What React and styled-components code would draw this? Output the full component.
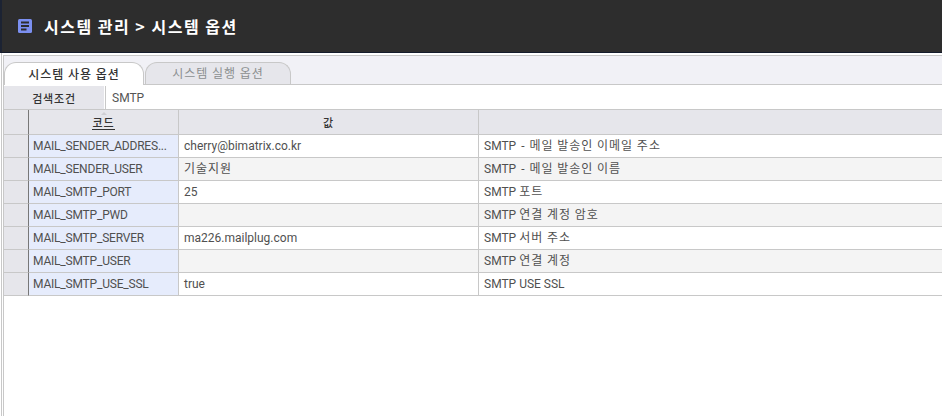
import React from 'react'
import styled, { createGlobalStyle } from 'styled-components'

const GlobalStyle = createGlobalStyle`
html,body{
  margin:0;
  padding:0;
  height:100%;
  background:#fff;
  overflow:hidden;
}
#root{height:100%;}
`;

const FONT = `Roboto,"Noto Sans CJK KR",sans-serif`;
const LINE = '#c8c8c8';

const Page = styled.div`
display:flex;
flex-direction:column;
width:942px;
height:416px;
overflow:hidden;
font-family:${FONT};
color:#444;
`;
const Header = styled.div`
display:flex;
align-items:center;
gap:12px;
height:53px;
flex:none;
box-sizing:border-box;
padding-left:16px;
background:#2d2d2d;
border-left:2px solid #1c2333;
border-bottom:1px solid #141c2c;
`;
const Icon = styled.svg`
width:14px;
height:14px;
flex:none;
`;
const Title = styled.div`
font-family:"Noto Sans CJK KR",sans-serif;
font-size:16px;
font-weight:700;
color:#fff;
letter-spacing:1.5px;
`;
const Body = styled.div`
flex:1;
display:flex;
flex-direction:column;
margin-left:1px;
padding:2px 0 0 1px;
border-left:1px solid ${LINE};
min-height:0;
`;
const Panel = styled.div`
flex:1;
display:flex;
flex-direction:column;
border-left:1px solid ${LINE};
border-top:1px solid ${LINE};
min-height:0;
`;
const TabBar = styled.div`
display:flex;
align-items:flex-end;
gap:1px;
height:29px;
flex:none;
box-sizing:border-box;
background:#f1f1f6;
border-bottom:1px solid ${LINE};
`;
const Tab = styled.div`
display:flex;
align-items:center;
justify-content:center;
box-sizing:border-box;
padding-bottom:2px;
font-family:"Noto Sans CJK KR",sans-serif;
font-size:12px;
letter-spacing:1px;
border:1px solid ${LINE};
border-bottom:none;
border-radius:12px 12px 0 0;
margin-bottom:${({ $active }) => ($active ? '-1px' : '0')};
height:${({ $active }) => ($active ? '23px' : '22px')};
width:${({ $active }) => ($active ? '140px' : '146px')};
background:${({ $active }) => ($active ? '#fff' : '#e6e6eb')};
color:${({ $active }) => ($active ? '#333' : '#8b8f90')};
font-weight:${({ $active }) => ($active ? 500 : 400)};
`;
const SearchRow = styled.div`
display:flex;
height:23px;
flex:none;
margin-top:1px;
`;
const SearchLabel = styled.div`
display:flex;
align-items:center;
justify-content:center;
width:100px;
flex:none;
font-family:"Noto Sans CJK KR",sans-serif;
font-size:11px;
font-weight:500;
letter-spacing:0.8px;
color:#333;
background:#e6e6eb;
`;
const SearchValue = styled.div`
flex:1;
display:flex;
align-items:center;
margin-left:1px;
padding-left:6px;
font-size:12px;
color:#555;
border-left:1px solid ${LINE};
`;
const Grid = styled.div`
display:grid;
grid-template-columns:25px 150px 300px 1fr;
grid-template-rows:25px;
grid-auto-rows:23px;
border-top:1px solid ${LINE};
& > :nth-child(4n){
  border-right:none;
}
`;
const Cell = styled.div`
display:flex;
align-items:center;
box-sizing:border-box;
padding-left:5px;
font-size:12px;
color:#505050;
white-space:nowrap;
overflow:hidden;
border-bottom:1px solid ${LINE};
border-right:1px solid ${LINE};
background:${({ $alt }) => ($alt ? '#f4f4f4' : '#fff')};
`;
const HeadCell = styled(Cell)`
position:relative;
justify-content:center;
padding-left:0;
font-family:"Noto Sans CJK KR",sans-serif;
font-size:11px;
font-weight:500;
letter-spacing:1px;
color:#333;
background:#e6e6eb;
`;
const SortLabel = styled.span`
line-height:14px;
border-bottom:1px solid #333;
`;
const SortMark = styled.span`
position:absolute;
top:2px;
left:50%;
margin-left:-3px;
width:0;
height:0;
border-left:3px solid transparent;
border-right:3px solid transparent;
border-bottom:3px solid #cfcfd4;
`;
const Marker = styled(Cell)`
padding:0;
background:#e6e6eb;
border-right:1px solid #777;
`;
const CodeCell = styled(Cell)`
padding-left:4px;
letter-spacing:-0.2px;
background:#e6ecfc;
`;
const MixedText = styled.span`
line-height:14px;
white-space:pre;
`;
const Ko = styled.span`
font-family:"Noto Sans CJK KR",sans-serif;
line-height:1;
letter-spacing:1px;
`;
const Dash = styled.span`
margin:0 2px;
`;

const rows = [
  { code: 'MAIL_SENDER_ADDRES...', value: 'cherry@bimatrix.co.kr', desc: 'SMTP - 메일 발송인 이메일 주소' },
  { code: 'MAIL_SENDER_USER', value: '기술지원', desc: 'SMTP - 메일 발송인 이름' },
  { code: 'MAIL_SMTP_PORT', value: '25', desc: 'SMTP 포트' },
  { code: 'MAIL_SMTP_PWD', value: '', desc: 'SMTP 연결 계정 암호' },
  { code: 'MAIL_SMTP_SERVER', value: 'ma226.mailplug.com', desc: 'SMTP 서버 주소' },
  { code: 'MAIL_SMTP_USER', value: '', desc: 'SMTP 연결 계정' },
  { code: 'MAIL_SMTP_USE_SSL', value: 'true', desc: 'SMTP USE SSL' },
];

// hangul runs and the dash get their own spacing, latin stays as it is
const Mixed = ({ text }) => (
  <MixedText>
    {text.split(/( - |[가-힣][가-힣 ]*)/).map((part, i) => {
      if (i % 2 === 0) return part;
      return part === ' - ' ? <Dash key={i}>{part}</Dash> : <Ko key={i}>{part}</Ko>;
    })}
  </MixedText>
);

const App = () => (
  <Page>
    <GlobalStyle />
    <Header>
      <Icon viewBox="0 0 14 14">
        <rect width="14" height="14" rx="1.5" fill="#7b8ff0" />
        <path d="M3 3.5h8M3 7h8M3 10.5h5.5" stroke="#2d2d2d" strokeWidth="1.8" />
      </Icon>
      <Title>시스템 관리 &gt; 시스템 옵션</Title>
    </Header>
    <Body>
      <Panel>
        <TabBar>
          <Tab $active>시스템 사용 옵션</Tab>
          <Tab>시스템 실행 옵션</Tab>
        </TabBar>
        <SearchRow>
          <SearchLabel>검색조건</SearchLabel>
          <SearchValue>SMTP</SearchValue>
        </SearchRow>
        <Grid>
          <Marker />
          <HeadCell><SortMark /><SortLabel>코드</SortLabel></HeadCell>
          <HeadCell>값</HeadCell>
          <HeadCell />
          {rows.map((row, i) => (
            <React.Fragment key={row.code}>
              <Marker />
              <CodeCell>{row.code}</CodeCell>
              <Cell $alt={i % 2 === 1}><Mixed text={row.value} /></Cell>
              <Cell $alt={i % 2 === 1}><Mixed text={row.desc} /></Cell>
            </React.Fragment>
          ))}
        </Grid>
      </Panel>
    </Body>
  </Page>
)

export default App
